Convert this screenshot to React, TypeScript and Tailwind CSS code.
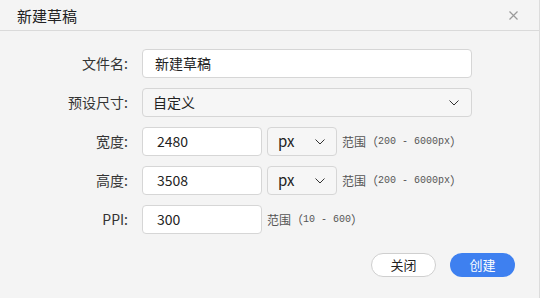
import React from "react";

const Chevron = () => (
  <svg width="10" height="6" viewBox="0 0 10 6" className="shrink-0">
    <polyline points="0.5,0.5 5,5 9.5,0.5" fill="none" stroke="#333" strokeWidth="1" />
  </svg>
);

const Range = ({ nums }: { nums: string }) => (
  <div className="flex items-center text-[12px] text-[#555] whitespace-nowrap" style={{ fontFamily: '"Noto Sans CJK SC", sans-serif' }}>
    <span>范围</span>
    <span>（</span>
    <span className="text-[10px]" style={{ fontFamily: '"Liberation Mono", monospace' }}>{nums}</span>
    <span>）</span>
  </div>
);

const Label = ({ children }: { children: React.ReactNode }) => (
  <div className="w-[129px] text-right text-[14px] text-[#333] shrink-0 pr-[1px]">{children}</div>
);

export default function App() {
  return (
    <div
      className="w-[540px] h-[298px] bg-[#f4f4f4] border-r border-[#dcdcdc] flex flex-col"
      style={{ fontFamily: '"Noto Sans CJK SC", "Noto Sans", sans-serif' }}
    >
      <div className="h-[31px] shrink-0 border-b border-[#dadada] flex items-center justify-between pl-[17px] pr-[21px]">
        <span className="text-[15px] text-[#222] leading-none">新建草稿</span>
        <svg width="9" height="9" viewBox="0 0 9 9">
          <path d="M0.5 0.5 L8.5 8.5 M8.5 0.5 L0.5 8.5" stroke="#9a9a9a" strokeWidth="1.2" />
        </svg>
      </div>
      <div className="flex flex-col gap-[10px] pt-[18px]">
        <div className="flex items-center gap-[13px]">
          <Label>文件名:</Label>
          <div className="w-[330px] h-[29px] bg-white border border-[#d6d6d6] rounded-[4px] flex items-center pl-[12px] text-[14px] text-[#222]">
            新建草稿
          </div>
        </div>
        <div className="flex items-center gap-[13px]">
          <Label>预设尺寸:</Label>
          <div className="w-[330px] h-[29px] bg-[#f6f6f6] border border-[#d6d6d6] rounded-[4px] flex items-center justify-between pl-[10px] pr-[12px] text-[14px] text-[#222]">
            <span>自定义</span>
            <Chevron />
          </div>
        </div>
        {[
          ["宽度:", "2480"],
          ["高度:", "3508"],
        ].map(([l, v]) => (
          <div key={l} className="flex items-center">
            <Label>{l}</Label>
            <div className="ml-[13px] w-[120px] h-[29px] bg-white border border-[#d6d6d6] rounded-[4px] flex items-center pl-[14px] text-[14px] text-[#222]">
              {v}
            </div>
            <div className="ml-[5px] w-[70px] h-[29px] bg-[#f6f6f6] border border-[#d6d6d6] rounded-[4px] flex items-center justify-between pl-[10px] pr-[11px] text-[15px] text-[#222]">
              <span>px</span>
              <Chevron />
            </div>
            <div className="ml-[5px]">
              <Range nums="200 - 6000px" />
            </div>
          </div>
        ))}
        <div className="flex items-center">
          <Label>PPI:</Label>
          <div className="ml-[13px] w-[120px] h-[29px] bg-white border border-[#d6d6d6] rounded-[4px] flex items-center pl-[14px] text-[14px] text-[#222]">
            300
          </div>
          <div className="ml-[5px]">
            <Range nums="10 - 600" />
          </div>
        </div>
      </div>
      <div className="flex justify-end gap-[14px] pr-[24px] mt-[19px]">
        <div className="w-[65px] h-[24px] rounded-full bg-white border border-[#cfcfcf] flex items-center justify-center text-[13px] text-[#222]">
          关闭
        </div>
        <div className="w-[65px] h-[24px] rounded-full bg-[#3e80f0] flex items-center justify-center text-[13px] text-white">
          创建
        </div>
      </div>
    </div>
  );
}
